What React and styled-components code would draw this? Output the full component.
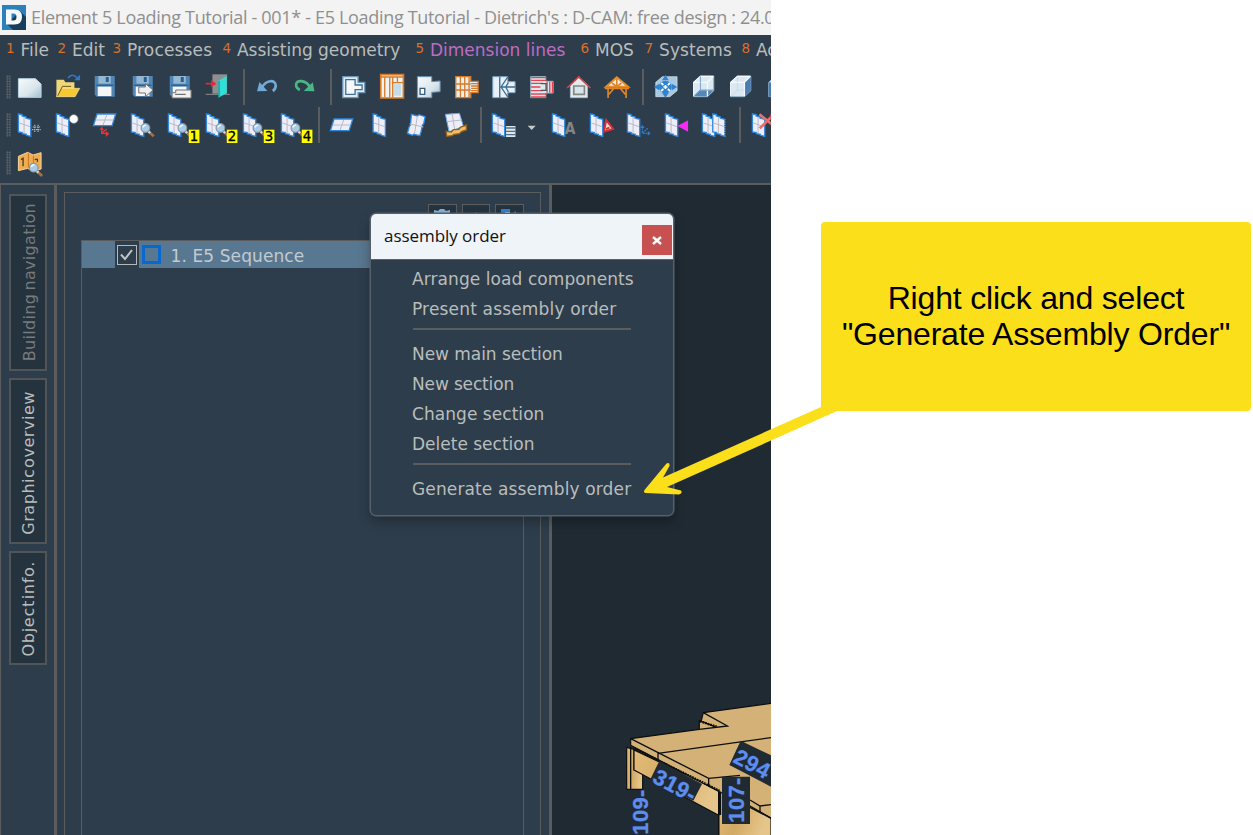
import React from "react";
import styled, { createGlobalStyle } from "styled-components";

const c = {
  base: "#2e3d4c",
  deep: "#25333e",
  view: "#1f2a33",
  line: "#5a5c5e",
  text: "#b9bdbb",
  yellow: "#fbdf1b",
};
const ui = `"DejaVu Sans", Verdana, sans-serif`;
const sys = `"Open Sans", "Noto Sans", sans-serif`;

const GlobalStyle = createGlobalStyle`
  *, *::before, *::after { box-sizing: border-box; }
  body { margin: 0; background: #fff; overflow: hidden; }
`;

const Page = styled.div`
  position: relative;
  display: flex;
  width: 1253px;
  height: 835px;
  overflow: hidden;
  background: #fff;
`;
const Window = styled.div`
  display: flex;
  flex-direction: column;
  flex: none;
  width: 771px;
  overflow: hidden;
  background: ${c.base};
  font-family: ${ui};
`;
const TitleBar = styled.header`
  display: flex;
  align-items: center;
  flex: none;
  height: 35px;
  padding-left: 2px;
  gap: 5px;
  background: #f3f3f3;
  color: #8f8f8f;
  white-space: nowrap;
`;
const Logo = styled.svg`
  flex: none;
  width: 24px;
  height: 25px;
`;
const TitleText = styled.span`
  font: 18px/35px ${sys};
  letter-spacing: -0.32px;
`;
const MenuBar = styled.nav`
  display: flex;
  flex: none;
  height: 33px;
  padding-left: 6px;
`;
const MenuItem = styled.div`
  display: flex;
  flex: none;
  width: ${(p) => p.$w}px;
  color: ${(p) => (p.$active ? "#bd6cc4" : c.text)};
  font-size: 17px;
  line-height: 31px;
  letter-spacing: ${(p) => p.$ls || 0}px;
  white-space: nowrap;
`;
const MenuKey = styled.span`
  flex: none;
  width: 14.5px;
  color: #d9702b;
  font-size: 13.5px;
  line-height: 27px;
  letter-spacing: 0;
`;
const ToolRow = styled.div`
  display: flex;
  align-items: center;
  flex: none;
  height: 38px;
  padding-left: 6px;
`;
const Grip = styled.span`
  flex: none;
  width: 5.25px;
  height: 24px;
  background-image: radial-gradient(circle, #5d646a 0.8px, transparent 1.1px);
  background-size: 2.6px 2.6px;
`;
const Tool = styled.svg`
  flex: none;
  width: ${(p) => p.$w || 37.5}px;
  height: 38px;
  overflow: visible;
`;
const ToolSep = styled.span`
  flex: none;
  width: 2px;
  height: 36px;
  margin: 0 3.5px 0 6.5px;
  background: ${c.line};
`;
const Body = styled.main`
  display: flex;
  flex: 1;
  min-height: 0;
  margin-top: 1px;
  border-top: 2px solid ${c.line};
`;
const TabRail = styled.aside`
  display: flex;
  flex-direction: column;
  flex: none;
  gap: 7px;
  width: 57px;
  padding: 9px 0 0 8px;
  border-left: 1.5px solid ${c.line};
  border-right: 3px solid ${c.line};
`;
const Tab = styled.div`
  display: flex;
  align-items: center;
  justify-content: center;
  width: 38px;
  height: ${(p) => p.$h}px;
  padding: ${(p) => p.$top || 0}px 0 0 ${(p) => p.$left || 0}px;
  border: 2px solid #515558;
  background: ${c.deep};
  color: ${(p) => (p.$dim ? "#777b7c" : c.text)};
`;
const TabText = styled.span`
  writing-mode: vertical-rl;
  transform: rotate(180deg);
  font-size: 16px;
  line-height: 20px;
  letter-spacing: ${(p) => p.$ls}px;
  word-spacing: ${(p) => p.$ws}px;
  white-space: nowrap;
`;
const Side = styled.section`
  display: flex;
  flex: none;
  width: 495px;
  padding: 7px 8px 0 7px;
  border-right: 3px solid ${c.line};
`;
const Panel = styled.div`
  display: flex;
  flex-direction: column;
  flex: 1;
  padding: 11px 16.5px 0 15.5px;
  border: 1.5px solid ${c.line};
  border-bottom: 0;
`;
const PanelButtons = styled.div`
  display: flex;
  justify-content: flex-end;
  gap: 5px;
  height: 36px;
`;
const PanelButton = styled.div`
  display: flex;
  justify-content: center;
  width: 28.5px;
  height: 28px;
  border: 1.5px solid ${c.line};
  background: ${c.deep};
`;
const Tree = styled.div`
  flex: 1;
  border: 1.5px solid ${c.line};
  border-bottom: 0;
`;
const TreeRow = styled.div`
  display: flex;
  align-items: center;
  height: 27px;
  padding-left: 33px;
  background: #587790;
  color: #c3cbd0;
  font-size: 17px;
  letter-spacing: 0.1px;
`;
const TreeLabel = styled.span`
  padding-top: 3px;
`;
const CheckCell = styled.div`
  display: flex;
  align-items: center;
  justify-content: center;
  width: 24px;
  height: 27px;
  background: ${c.base};
`;
const CheckBox = styled.div`
  display: flex;
  width: 20px;
  height: 20px;
  border: 1.5px solid #b5b8b8;
  svg { width: 17px; height: 17px; }
`;
const Swatch = styled.div`
  width: 19px;
  height: 19px;
  margin: 0 10px 0 3px;
  border: 3px solid #0868cf;
`;
const Viewport = styled.section`
  display: flex;
  flex: 1;
  align-items: flex-end;
  justify-content: flex-end;
  background: ${c.view};
  svg { flex: none; width: 171px; height: 145px; }
`;
const Dialog = styled.div`
  position: absolute;
  left: 370px;
  top: 213px;
  width: 304px;
  height: 303px;
  overflow: hidden;
  border: 1px solid #566068;
  border-radius: 6px;
  background: ${c.base};
  box-shadow: 0 0 0 0.5px #566068, 0 6px 12px rgba(0, 0, 0, 0.28);
  font-family: ${ui};
`;
const DialogHead = styled.div`
  display: flex;
  align-items: center;
  justify-content: space-between;
  height: 46px;
  padding: 0 1px 0 13px;
  background: #eff4f9;
  border-bottom: 1px solid #56636e;
  color: #111;
  font: 17px ${sys};
`;
const DialogTitle = styled.span`
  padding-bottom: 2px;
  letter-spacing: -0.05px;
`;
const CloseButton = styled.button`
  display: flex;
  align-items: center;
  justify-content: center;
  width: 30px;
  height: 30px;
  margin-top: 7px;
  padding: 0;
  border: 0;
  background: #c75050;
`;
const DialogList = styled.div`
  display: flex;
  flex-direction: column;
  padding: 4px 41px 0;
`;
const DialogItem = styled.div`
  height: 30px;
  color: ${c.text};
  font-size: 17px;
  line-height: 30px;
  letter-spacing: ${(p) => p.$ls}px;
  white-space: nowrap;
`;
const DialogSep = styled.div`
  height: 2px;
  margin: 4px 1px 9px;
  background: ${c.line};
`;
const Notes = styled.aside`
  flex: 1;
  padding: 222px 2px 0 50px;
`;
const Callout = styled.div`
  display: flex;
  align-items: center;
  justify-content: center;
  height: 189px;
  padding-bottom: 2px;
  border-radius: 4px;
  background: ${c.yellow};
  color: #000;
  font: 32px/36px "Liberation Sans", Arial, sans-serif;
  letter-spacing: -0.18px;
  text-align: center;
  white-space: pre-line;
`;
const Pointer = styled.svg`
  position: absolute;
  left: 640px;
  top: 400px;
  width: 210px;
  height: 100px;
`;

/* Drawings share a 3:1 grid centred on the icon's slot. */
const Icon = ({ children }) => <Tool viewBox="-56.25 -57 112.5 114">{children}</Tool>;

const Pane = ({ x = 0, y = 0 }) => (
  <g transform={`translate(${x} ${y})`}>
    <path d="M-34-33L-23-31V-27L-11-24V-20L3-17V34L-10 31V28L-22 26V23L-34 21Z" fill="#eeeefa" stroke="#3288dc" strokeWidth="4" />
    <path d="M-17-24V24M-31-6L1 5" stroke="#b9bac2" strokeWidth="3" fill="none" />
  </g>
);
const FlatPane = ({ y = 0 }) => (
  <g transform={`translate(0 ${y})`}>
    <path d="M-23-18H33L22 17H-34Z" fill="#eeeefa" stroke="#3288dc" strokeWidth="4" />
    <path d="M6-16L-5 15M-27 0H26" stroke="#b9bac2" strokeWidth="3" />
  </g>
);
const Lens = ({ x = 0, y = 0 }) => (
  <g transform={`translate(${x} ${y})`}>
    <path d="M18 20L33 34" stroke="#a4713f" strokeWidth="8" />
    <path d="M16 18L22 24" stroke="#d7d7d7" strokeWidth="7" />
    <circle cx="8" cy="9" r="13" fill="#a9cbe5" stroke="#8397a5" strokeWidth="3.5" />
    <path d="M0 7Q3 0 10 0" stroke="#eef8ff" strokeWidth="5" fill="none" />
  </g>
);
const Floppy = () => (
  <g>
    <path d="M-30-33H30V29H-24L-30 23Z" fill="#5086b6" />
    <path d="M-19-33H18V-10H-19Z" fill="#96b7d2" />
    <path d="M3-30H12V-15H3Z" fill="#285f91" />
    <path d="M-21-1H20V27H-21Z" fill="#f6f6f6" />
    <path d="M-26-5H26" stroke="#2b6294" strokeWidth="4" />
  </g>
);
const Cube = ({ side }) => (
  <g>
    <path d="M-30-14L-10-33H30V11L11 29H-30Z" fill="#dbe8f2" stroke="#8fb2cd" strokeWidth="3" />
    {side ? (
      <path d="M11-14L30-32V11L11 29Z" fill="#4b7cae" />
    ) : (
      <path d="M-30 27L-13 10H29L11 28Z" fill="#5287b6" />
    )}
    <path d="M-30-14H11V28M11-14L29-32M-30 28V-14L-10-32H29" stroke="#f4f9fd" strokeWidth="4" fill="none" />
    <path d="M-10-32V9H29M-10 9L-29 28" stroke="#7ca5c5" strokeWidth="3" fill="none" opacity={side ? 0.2 : 1} />
  </g>
);
const Badge = ({ n }) => (
  <g>
    <rect x="27" y="14" width="32" height="40" fill="#ffff00" />
    <text x="43" y="48" textAnchor="middle" fontFamily="DejaVu Sans" fontSize="40" stroke="#000" strokeWidth="1">{n}</text>
  </g>
);

const icons = {
  file: <path d="M-34-25H17L34-9V31H-34Z" fill="url(#sheet)" stroke="#b7d2df" strokeWidth="3" />,
  open: (
    <g>
      <path d="M-34-22H-12L-7-14H20V28H-34Z" fill="#f2d779" />
      <path d="M-34 29L-20 4H36L22 29Z" fill="#f7c92f" stroke="#f8e5a0" strokeWidth="2" />
      <path d="M-30 26L-16-2H10" stroke="#69591e" strokeWidth="3" fill="none" />
      <path d="M1-27Q12-43 28-28" stroke="#2e78c6" strokeWidth="5" fill="none" />
      <path d="M37-37V-20H19Z" fill="#2e78c6" />
    </g>
  ),
  save: <Floppy />,
  saveAs: (
    <g>
      <Floppy />
      <path d="M-12 0H8V-10L31 9L8 29V18H-12Z" fill="#eee" stroke="#747474" strokeWidth="3" />
    </g>
  ),
  saveDoc: (
    <g>
      <Floppy />
      <path d="M-23 17H-12V9H34V33H-23Z" fill="#f1f1f1" stroke="#747474" strokeWidth="3" />
      <path d="M-14 22H18" stroke="#555" strokeWidth="3" />
    </g>
  ),
  exit: (
    <g>
      <path d="M-16-38H28V20H-16Z" fill="#8f8f8f" />
      <path d="M-36 22H36" stroke="#8f8f8f" strokeWidth="3" />
      <path d="M2-19L27-33V18L2 32Z" fill="#2fe0d9" />
      <path d="M4-18V29" stroke="#078d90" strokeWidth="3" />
      <path d="M-36-10H-16" stroke="#ed2630" strokeWidth="5" />
      <path d="M-20-21L-4-10L-20 1Z" fill="#ed2630" />
    </g>
  ),
  undo: (
    <g>
      <path d="M-15 3C-3-22 28-24 27-3Q26 7 18 12" stroke="#72abd9" strokeWidth="8" fill="none" />
      <path d="M-29 13L-22-15L2 12Z" fill="#72abd9" />
    </g>
  ),
  redo: (
    <g>
      <path d="M17 3C5-22-28-24-26-5Q-25 4-15 9" stroke="#4bb685" strokeWidth="8" fill="none" />
      <path d="M29 13L24-14L-3 12Z" fill="#4bb685" />
    </g>
  ),
  plan: (
    <g>
      <path d="M-33-31H13V-14H33V17H13V32H-33Z" fill="#dfebf2" stroke="#6b96ba" strokeWidth="4" />
      <path d="M-24-22H4V-6H25V8H4V22H-24Z" fill="#f4f8fb" stroke="#456f91" strokeWidth="4" />
    </g>
  ),
  frame: (
    <g>
      <path d="M-33-37H35V33H-33Z" fill="#f0f2f2" stroke="#d67b29" strokeWidth="5" />
      <path d="M-33-30H34M-21-30V31M-6-30V31M0-13H34M3-30V31M17-30V-14" stroke="#d67b29" strokeWidth="4" />
      <path d="M7-9H28V26H7Z" fill="#c5dbe7" />
    </g>
  ),
  footprint: (
    <g>
      <path d="M-34-31H9V-16L34-18V14L9 16V32H-34Z" fill="url(#sheet)" stroke="#6d96b7" strokeWidth="3" />
      <path d="M-26 4H-12V22H-26Z" fill="#fff" stroke="#345e7c" strokeWidth="4" />
    </g>
  ),
  joists: (
    <g>
      <path d="M-33-31H12V-17H34V17H12V32H-33Z" fill="#e9eef0" stroke="#d67b29" strokeWidth="4" />
      <path d="M-19-30V31M-6-30V31M7-30V31M-33-9H12M-33 9H12M13-10H34M13-3H34M13 4H34M13 11H34" stroke="#d67b29" strokeWidth="4" />
    </g>
  ),
  roofPlan: (
    <g>
      <path d="M-33-31H12V-16H34V17H12V32H-33Z" fill="#e6f0f6" stroke="#7da5c3" strokeWidth="3" />
      <path d="M-12-31V32M12-30L-8 0L12 30M-8 0H34M6 0L14-14M6 0L14 15" stroke="#3c6b90" strokeWidth="4" fill="none" />
    </g>
  ),
  ceiling: (
    <g>
      <path d="M-33-31H12V-17H34V18H12V32H-33Z" fill="#dce8ef" stroke="#9cb7c8" strokeWidth="3" />
      <path d="M-32-28H13M-32-20H13M-32-11H4M-32 0H-4M-32 11H4M-32 21H13M-32 30H13M16-16V17M24-16V17M32-16V17" stroke="#e44450" strokeWidth="4" />
      <path d="M-3-10H13V10H-3" fill="none" stroke="#4c535c" strokeWidth="4" />
    </g>
  ),
  house: (
    <g>
      <path d="M-25-7L0-29L26-7V32H-25Z" fill="#e3ebee" stroke="#a6bac6" strokeWidth="3" />
      <path d="M-15-3H17V22H-15Z" fill="#d4e6ec" stroke="#858583" strokeWidth="5" />
      <path d="M-35 3L0-30L35 3" fill="none" stroke="#d4444b" strokeWidth="5" />
    </g>
  ),
  truss: (
    <g>
      <path d="M-32-1L0-29L34-1Z" fill="#f0eee7" stroke="#e28d2d" strokeWidth="6" />
      <path d="M-36 4H37M-26 6V33M28 6V33M-24 22L-10 6M26 22L12 6M0-26V5M-14-12L0-1L14-12" stroke="#df8426" strokeWidth="5" fill="none" />
    </g>
  ),
  fit: (
    <g>
      <path d="M-30-14L-10-31H34V11L12 29H-30Z" fill="#a9c7de" stroke="#dce9f2" strokeWidth="2" />
      <circle cx="-1" cy="0" r="19" fill="#2f84d2" />
      <path d="M-1-37L9-20H-11ZM-1 33L9 17H-11ZM-36 0L-19-10V10ZM35 0L18-10V10Z" fill="#2f84d2" />
      <path d="M-14-12L-7-6M13-12L6-6M-14 12L-7 6M13 12L6 6M-7 0H5M-1-6V6" stroke="#fff" strokeWidth="5" />
    </g>
  ),
  cubeBottom: <Cube />,
  cubeSide: <Cube side />,
  cubeFront: (
    <g>
      <path d="M-30-14L-10-33H30V11L11 29H-30Z" fill="#dbe8f2" stroke="#8fb2cd" strokeWidth="3" />
      <path d="M-30-14H11V29H-30Z" fill="#4b7cae" />
    </g>
  ),
  paneGrid: (
    <g>
      <Pane />
      <path d="M9 6H31M7 14H33M15-1V23M25-1V23" stroke="#b4b8ba" strokeWidth="3.5" strokeDasharray="4 2" />
    </g>
  ),
  paneDot: (
    <g>
      <Pane />
      <circle cx="18" cy="-18" r="13" fill="#fff" stroke="#8d9193" strokeWidth="2" />
    </g>
  ),
  paneAxes: (
    <g>
      <FlatPane y={-15} />
      <path d="M-9 8V25H12M-9 24L6 12" stroke="#ef3038" strokeWidth="4" fill="none" />
      <path d="M-16 14L-9 5L-2 14ZM3 18L13 27L3 36Z" fill="#ef3038" />
    </g>
  ),
  paneLens: <g><Pane /><Lens /></g>,
  lens1: <g><Pane /><Lens /><Badge n="1" /></g>,
  lens2: <g><Pane /><Lens /><Badge n="2" /></g>,
  lens3: <g><Pane /><Lens /><Badge n="3" /></g>,
  lens4: <g><Pane /><Lens /><Badge n="4" /></g>,
  flat: <FlatPane />,
  upright: <Pane x={14} />,
  tilted: (
    <g transform="translate(-1 0)">
      <path d="M-15-32L3-27L8-31L26-25L22-4L18 0L14 20L10 32L-8 28L-12 31L-27 25L-22 6L-18 0Z" fill="#eeeefa" stroke="#3288dc" strokeWidth="4" />
      <path d="M3-27L-6 27M-20-3L21 6" stroke="#b9bac2" strokeWidth="3" />
    </g>
  ),
  onBeam: (
    <g>
      <path d="M-28-32L14-35L26 4L-17 20Z" fill="#eeeefa" stroke="#6da9e4" strokeWidth="3" />
      <path d="M-8-34L0 15M-24-10L20-15" stroke="#b9bac2" strokeWidth="3" />
      <path d="M-26 19L-10 21L-4 14L12 13L18 6L35 0V15L20 20L14 26L-2 28L-8 32L-24 34Z" fill="#f2bd69" stroke="#93601e" strokeWidth="4" />
    </g>
  ),
  paneList: (
    <g>
      <Pane />
      <path d="M7 3H35V36H7Z" fill="#dfe8ec" />
      <path d="M7 9H35M7 19H35M7 29H35" stroke="#4f7086" strokeWidth="4" />
    </g>
  ),
  paneText: (
    <g>
      <Pane />
      <text x="3" y="28" fontFamily="DejaVu Sans" fontWeight="bold" fontSize="48" textLength="32" lengthAdjust="spacingAndGlyphs" fill="#858585">A</text>
    </g>
  ),
  paneSet: (
    <g>
      <Pane />
      <path d="M7 20L13-15L34 12Z" fill="#f3dcdc" stroke="#d82d36" strokeWidth="6" />
      <path d="M13 12L23 8" stroke="#c83535" strokeWidth="6" />
    </g>
  ),
  paneOrigin: (
    <g>
      <Pane />
      <path d="M11 2V25H33M11 24L27 10" fill="none" stroke="#2d7bc9" strokeWidth="4" strokeDasharray="6 2" />
      <path d="M4 9L11 0L18 9ZM27 18L36 25L27 32Z" fill="#2d7bc9" />
    </g>
  ),
  paneArrow: <g><Pane /><path d="M2 3L34-14V20Z" fill="#f72cf2" /></g>,
  paneCopy: (
    <g>
      <Pane />
      <Pane x={31} />
      <path d="M35-28V34" stroke={c.base} strokeWidth="5" strokeDasharray="3 4" />
    </g>
  ),
  paneCut: (
    <g>
      <Pane />
      <path d="M-12 10L24-26M-13-32L28 1" stroke="#e9706c" strokeWidth="8" />
      <circle cx="29" cy="-26" r="7" fill="none" stroke="#d63d40" strokeWidth="6" />
    </g>
  ),
  map: (
    <g>
      <path d="M-34-20L-6-32L10-24L34-31V18L10 26L-6 16L-34 23Z" fill="#efad51" stroke="#f4d39b" strokeWidth="3" />
      <path d="M-4-30V14M11-22V24" stroke="#c57725" strokeWidth="3" />
      <path d="M-26-10L-20-14V10M15-10Q27-16 22-3" stroke="#553b27" strokeWidth="4" fill="none" />
      <Lens x={4} y={5} />
    </g>
  ),
};

const rows = [
  ["file", "open", "save", "saveAs", "saveDoc", "exit", "|", "undo", "redo", "|", "plan", "frame", "footprint", "joists", "roofPlan", "ceiling", "house", "truss", "|", "fit", "cubeBottom", "cubeSide", "cubeFront"],
  ["paneGrid", "paneDot", "paneAxes", "paneLens", "lens1", "lens2", "lens3", "lens4", "|", "flat", "upright", "tilted", "onBeam", "|", "paneList", "v", "paneText", "paneSet", "paneOrigin", "paneArrow", "paneCopy", "|", "paneCut"],
  ["map"],
];
const menus = [
  ["1", "File", 51.5, 0],
  ["2", "Edit", 55, 0],
  ["3", "Processes", 110, 0.15],
  ["4", "Assisting geometry", 193, -0.02],
  ["5", "Dimension lines", 165, 0],
  ["6", "MOS", 64, 0],
  ["7", "Systems", 97, 0.1],
  ["8", "Ac", 80, 0],
];
const actions = [
  ["Arrange load components", 0.08],
  ["Present assembly order", 0.17],
  null,
  ["New main section", -0.05],
  ["New section", -0.15],
  ["Change section", 0.05],
  ["Delete section", 0],
  null,
  ["Generate assembly order", 0.13],
];

const Scene = () => (
  <svg viewBox="0 0 513 435">
    <defs>
      <linearGradient id="wood" x1="0" x2="1" y1="0" y2="0.3">
        <stop offset="0" stopColor="#e2bd78" />
        <stop offset="0.5" stopColor="#d3a964" />
        <stop offset="1" stopColor="#e6c58a" />
      </linearGradient>
    </defs>
    <g stroke="#0d0f0e" strokeWidth="3.5" strokeLinejoin="round">
      <path d="M356 300L400 300L460 345L513 385V440H356Z" fill="url(#wood)" />
      <path d="M80 172L102 178V240L128 250V298H80Z" fill="url(#wood)" />
      <path d="M102 180L356 300V376L102 240Z" fill="url(#wood)" />
      <path d="M92 146L298 118V92H304L310 68L520 39V388L450 348L358 305L92 166Z" fill="#d4b177" />
    </g>
    <g stroke="#0d0f0e" strokeWidth="4" fill="none">
      <path d="M92 146L326 265L420 256M174 190L513 143M326 265V288L358 303M174 190V210M310 68L382 108L298 118M298 92L345 110M450 330L480 348L513 344M480 348V368M356 304V435M450 352L513 385M92 172V298" />
      <path d="M104 176L358 302M300 94L350 110" strokeWidth="7" strokeDasharray="5 3" />
      <path d="M360 305V375" strokeWidth="7" />
    </g>
    <g fill={c.view}>
      <path d="M178 213L306 282L280 332L150 270Z" />
      <path d="M422 152L513 196V290L388 225Z" />
      <path d="M366 260H450V402H366Z" />
      <path d="M84 300H146V435H84Z" />
    </g>
    <g fill="#5e8df0" stroke="#5e8df0" strokeWidth="1" fontFamily="Liberation Sans" fontWeight="bold" fontSize="66">
      <text transform="translate(154 275) rotate(28)" letterSpacing="1">319-</text>
      <text transform="translate(396 215) rotate(28)" letterSpacing="1">294</text>
      <text transform="translate(432 398) rotate(-90)" letterSpacing="1">107-</text>
      <text transform="translate(145 434) rotate(-90)" letterSpacing="1">109-</text>
    </g>
  </svg>
);

export default function App() {
  return (
    <Page>
      <GlobalStyle />
      <Window>
        <TitleBar>
          <Logo viewBox="0 0 24 25">
            <path d="M0 0H24V25H0Z" fill="#2c80bb" />
            <path d="M18 6L24 12V25H11L5 19Z" fill="#173e5b" />
            <path fillRule="evenodd" d="M4 4.5H12.5Q20 4.5 20 12Q20 19.5 12.5 19.5H4ZM9.5 8.5V15.5H11.5Q14.5 15.5 14.5 12Q14.5 8.5 11.5 8.5Z" fill="#f6f8f9" />
          </Logo>
          <TitleText>Element 5 Loading Tutorial - 001* - E5 Loading Tutorial - Dietrich's : D-CAM: free design : 24.0</TitleText>
        </TitleBar>
        <MenuBar>
          {menus.map(([key, label, w, ls]) => (
            <MenuItem key={key} $w={w} $ls={ls} $active={key === "5"}>
              <MenuKey>{key}</MenuKey>
              {label}
            </MenuItem>
          ))}
        </MenuBar>
        {rows.map((row, r) => (
          <ToolRow key={r}>
            <Grip />
            {row.map((name, i) => {
              if (name === "|") return <ToolSep key={i} />;
              if (name === "v")
                return (
                  <Tool key={i} $w={22.5} viewBox="-34 -57 67.5 114">
                    <path d="M-20 2H4L-8 15Z" fill="#c6c9ca" />
                  </Tool>
                );
              return (
                <Icon key={i}>
                  {name === "file" && (
                    <linearGradient id="sheet" x1="0" y1="0" x2="1" y2="1">
                      <stop offset="0" stopColor="#f7fbfc" />
                      <stop offset="0.6" stopColor="#d9e6ec" />
                      <stop offset="1" stopColor="#9fbfd0" />
                    </linearGradient>
                  )}
                  {icons[name]}
                </Icon>
              );
            })}
          </ToolRow>
        ))}
        <Body>
          <TabRail>
            <Tab $h={177} $left={4} $dim><TabText $ls={0.3} $ws={-2}>Building navigation</TabText></Tab>
            <Tab $h={165.5} $left={2} $top={4}><TabText $ls={0.55} $ws={-5}>Graphic overview</TabText></Tab>
            <Tab $h={114} $left={2} $top={3}><TabText $ls={0.7} $ws={-5}>Object info.</TabText></Tab>
          </TabRail>
          <Side>
            <Panel>
              <PanelButtons>
                <PanelButton>
                  <svg width="18" height="20" viewBox="0 0 18 20"><path d="M1 5L5 6L7 4H11L13 6L17 5V18H1Z" fill="#88afd8" /></svg>
                </PanelButton>
                <PanelButton>
                  <svg width="18" height="20" viewBox="0 0 18 20"><path d="M9 7L13 12H5Z" fill="#7d8387" /></svg>
                </PanelButton>
                <PanelButton>
                  <svg width="18" height="20" viewBox="0 0 18 20"><path d="M1 4H10V18H1Z" fill="#2d80d0" /><path d="M5 7H10V18H5Z" fill="#c1d9ee" /><path d="M16 6V12L11 9Z" fill="#2d80d0" /></svg>
                </PanelButton>
              </PanelButtons>
              <Tree>
                <TreeRow>
                  <CheckCell>
                    <CheckBox>
                      <svg viewBox="0 0 17 17"><path d="M3 8.5L7 13L14 4" fill="none" stroke="#c3c6c6" strokeWidth="2" /></svg>
                    </CheckBox>
                  </CheckCell>
                  <Swatch />
                  <TreeLabel>1. E5 Sequence</TreeLabel>
                </TreeRow>
              </Tree>
            </Panel>
          </Side>
          <Viewport><Scene /></Viewport>
        </Body>
      </Window>
      <Notes>
        <Callout>{'Right click and select\n"Generate Assembly Order"'}</Callout>
      </Notes>
      <Dialog>
        <DialogHead>
          <DialogTitle>assembly order</DialogTitle>
          <CloseButton aria-label="Close">
            <svg width="10" height="9" viewBox="0 0 10 9"><path d="M1 1L9 8M9 1L1 8" stroke="#fff" strokeWidth="2.4" /></svg>
          </CloseButton>
        </DialogHead>
        <DialogList>
          {actions.map((a, i) => (a ? <DialogItem key={i} $ls={a[1]}>{a[0]}</DialogItem> : <DialogSep key={i} />))}
        </DialogList>
      </Dialog>
      <Pointer viewBox="640 400 210 100">
        <path
          d="M821 407L663 477.5L669.5 466Q670 462 666.5 463.5L644.5 490Q643 493 646 493L679 494.5Q683 493.5 681 490.5L667 487L837 411L840 405H826Z"
          fill={c.yellow}
        />
      </Pointer>
    </Page>
  );
}
